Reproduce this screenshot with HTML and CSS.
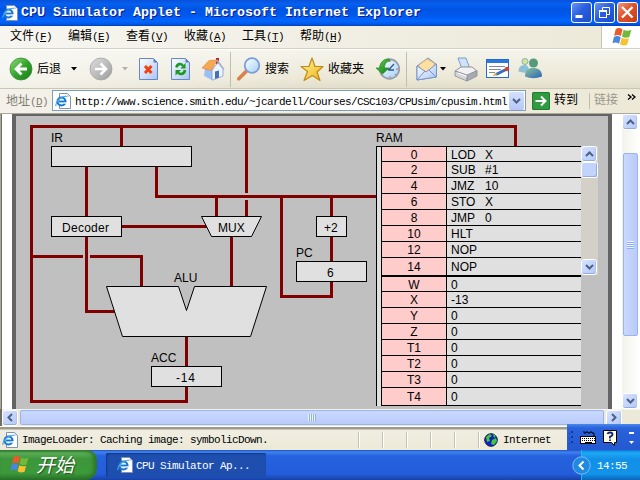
FILE: index.html
```html
<!DOCTYPE html>
<html lang="zh-CN">
<head>
<meta charset="utf-8">
<title>CPU Simulator Applet - Microsoft Internet Explorer</title>
<link rel="stylesheet" href="styles.css">
</head>
<body>
<svg class="defs" width="0" height="0" aria-hidden="true">
  <defs>
    <linearGradient id="green" x1="0" y1="0" x2="1" y2="1"><stop offset="0" stop-color="#8fdc7c"/><stop offset=".5" stop-color="#35a62c"/><stop offset="1" stop-color="#157a14"/></linearGradient>
    <linearGradient id="grey" x1="0" y1="0" x2="1" y2="1"><stop offset="0" stop-color="#dedede"/><stop offset="1" stop-color="#9c9c9c"/></linearGradient>
    <linearGradient id="paper" x1="0" y1="0" x2="1" y2="1"><stop offset="0" stop-color="#ffffff"/><stop offset="1" stop-color="#a9c4f4"/></linearGradient>
    <linearGradient id="glass" x1="0" y1="0" x2="1" y2="1"><stop offset="0" stop-color="#ffffff"/><stop offset="1" stop-color="#9fd0f8"/></linearGradient>
    <linearGradient id="gold" x1="0" y1="0" x2="1" y2="1"><stop offset="0" stop-color="#fff7a8"/><stop offset="1" stop-color="#f0b010"/></linearGradient>
    <linearGradient id="person" x1="0" y1="0" x2="1" y2="1"><stop offset="0" stop-color="#8cc49c"/><stop offset="1" stop-color="#2b63b8"/></linearGradient>
    <symbol id="flag" viewBox="0 0 20 18">
      <path fill="#ea5a2a" d="M3.500 2Q6.500 0 10 2L8.500 8.500Q5.500 6.500 2 8.500Z"/>
      <path fill="#72b83a" d="M11 2.500Q14.500 4.500 18.500 2.500L16.500 9.500Q13 11 9.500 9Z"/>
      <path fill="#4a86dc" d="M1.700 9.600Q5 7.600 8.300 9.600L6.700 15.800Q3.500 14 .5 15.500Z"/>
      <path fill="#f6c230" d="M9.200 10.200Q12.500 12 16.200 10.700L14.500 16.700Q11 18.500 7.600 16.300Z"/>
    </symbol>
    <symbol id="iepage" viewBox="0 0 16 16">
      <path fill="#fff" stroke="#8090b0" d="M4.500 .5H12.500L15.500 3.500V15.500H4.500Z"/>
      <path fill="#c8d4e8" d="M12 1V4H15Z"/>
      <circle cx="6.500" cy="8.500" r="4" fill="#e8f6ff" stroke="#1976d2" stroke-width="2.200"/>
      <path d="M4 8.500H10.500" stroke="#1976d2" stroke-width="1.800"/>
      <path d="M9 10H13" stroke="#fff" stroke-width="1.400"/>
      <path d="M1 13C0 9 7 2 12 3.500" fill="none" stroke="#46a9ea" stroke-width="1.200"/>
    </symbol>
  </defs>
</svg>

<div class="window">
  <header class="titlebar">
    <svg class="title-icon" width="16" height="16"><use href="#iepage"/></svg>
    <span class="title-text">CPU Simulator Applet - Microsoft Internet Explorer</span>
    <span class="caption min"><svg width="21" height="21"><rect x="4.500" y="13" width="7" height="3" fill="#fff"/></svg></span>
    <span class="caption max"><svg width="21" height="21"><path d="M8.500 8V5.500H15.500V12.500H13" fill="none" stroke="#fff"/><rect x="5.500" y="8.500" width="7" height="7" fill="none" stroke="#fff"/><path d="M5 9H13" stroke="#fff" stroke-width="2"/></svg></span>
    <span class="caption close"><svg width="21" height="21"><path d="M5 5L15.500 15.500M15.500 5L5 15.500" stroke="#fff" stroke-width="2.300"/></svg></span>
  </header>

  <nav class="menubar">
    <span>文件<i>(<u>F</u>)</i></span><span>编辑<i>(<u>E</u>)</i></span><span>查看<i>(<u>V</u>)</i></span><span>收藏<i>(<u>A</u>)</i></span><span>工具<i>(<u>T</u>)</i></span><span>帮助<i>(<u>H</u>)</i></span>
    <div class="throbber"><svg width="21" height="19"><use href="#flag"/></svg></div>
  </nav>

  <div class="toolbar">
    <svg class="back" width="24" height="24"><circle cx="12" cy="12" r="11" fill="url(#green)" stroke="#3c8a3a" stroke-width=".8"/><path d="M18 12H7.500M12.500 6.500L7 12L12.500 17.500" fill="none" stroke="#fff" stroke-width="2.800"/></svg>
    <span class="label back-label">后退</span>
    <svg class="drop" width="6" height="4"><path d="M0 0H6L3 3.500Z" fill="#000"/></svg>
    <svg class="forward" width="24" height="24"><circle cx="12" cy="12" r="11" fill="url(#grey)" stroke="#a4a4a4" stroke-width=".8"/><path d="M6 12H16.500M11.500 6.500L17 12L11.500 17.500" fill="none" stroke="#fff" stroke-width="2.600"/></svg>
    <svg class="drop2" width="6" height="4"><path d="M0 0H6L3 3.500Z" fill="#b5b2a5"/></svg>
    <svg class="stop" width="20" height="24"><path d="M.5 1.500H14.500L18.500 5.500V22.500H.5Z" fill="url(#paper)" stroke="#6488c8"/><path d="M14.500 1.500V5.500H18.500Z" fill="#5a80c4"/><path d="M6 9L12.500 16M12.500 9L6 16" stroke="#f0420e" stroke-width="3"/></svg>
    <svg class="refresh" width="20" height="24"><path d="M.5 1.500H14.500L18.500 5.500V22.500H.5Z" fill="url(#paper)" stroke="#6488c8"/><path d="M14.500 1.500V5.500H18.500Z" fill="#5a80c4"/><path d="M5.500 10.500C6 6.500 10.500 6 12 9M14 13C13.500 17.500 9 18 7 15.500" fill="none" stroke="#1b9a22" stroke-width="2.600"/><path d="M14.500 6V11.500H9.500ZM4.500 18.500V13H10Z" fill="#1b9a22"/></svg>
    <svg class="home" width="24" height="24"><rect x="15" y="1" width="3" height="6" fill="#b3242c"/><path d="M4 11L13 6L11 23L3 19Z" fill="#9cc0f4"/><path d="M11 23V13L17 5.500L22 12V19L12 23Z" fill="#eef4ff" stroke="#7c9fd8" stroke-width=".8"/><path d="M1 11L8 3.500L16.500 3L10 13.500Z" fill="#f8a850" stroke="#e07f2c" stroke-width=".6"/><path d="M16 3L23 12.500" stroke="#a8b4cc" stroke-width="1.400"/><path d="M14 14.500L18 13.500V20.500L14 22Z" fill="#4470b4"/></svg>
    <span class="sep"></span>
    <svg class="search" width="24" height="24"><path d="M1.800 21.800L9.500 14" stroke="#d8824a" stroke-width="3.600" stroke-linecap="round"/><circle cx="15" cy="8.500" r="7.300" fill="url(#glass)" stroke="#7d9cdb" stroke-width="1.800"/></svg>
    <span class="label search-label">搜索</span>
    <svg class="star" width="25" height="25"><path d="M12 1L15 9.500L23 9.500L17 15L20 23.500L12.500 18.500L4 23.500L7.500 14.500L1 9.500L9 9.500Z" fill="url(#gold)" stroke="#c08a12" stroke-width="1.200" stroke-linejoin="round"/></svg>
    <span class="label fav-label">收藏夹</span>
    <svg class="history" width="24" height="24"><circle cx="13.500" cy="12" r="9.700" fill="url(#glass)" stroke="#98a0ac" stroke-width="1.900"/><path d="M12.500 13L18 7M12 13H18" stroke="#345a88" stroke-width="1.300"/><path d="M14 5V3.500M22 12H20M14 20.500V19M19 17L20 18" stroke="#c66"/><path d="M13 2C7 2 4 6 4 11H0L6.500 17L13 11H8.500C8.500 7 10 4.500 14 4Z" fill="url(#green)" stroke="#20892a" stroke-width=".7"/></svg>
    <span class="sep sep2"></span>
    <svg class="mail" width="22" height="24"><path d="M1 9L12 1L20 7V20L1 23Z" fill="#bdd8fa" stroke="#7594c8"/><path d="M3 8L11 2L18 6V12L11 15L4 12Z" fill="#ffe0a0" stroke="#e1b067" stroke-width=".8"/><path d="M1 9L10 15L20.500 7V20L1 23Z" fill="url(#paper)" stroke="#7594c8"/><path d="M1 23L9 14M20 20L13 13" stroke="#7594c8"/></svg>
    <svg class="drop3" width="6" height="4"><path d="M0 0H6L3 3.500Z" fill="#000"/></svg>
    <svg class="printer" width="25" height="25"><path d="M4 1H12L16 12H8Z" fill="#cfe3fd" stroke="#7d9ccc"/><path d="M1 14L7 10H18L23 14L14 19Z" fill="#f2f2f2" stroke="#929292"/><path d="M1 14L13 18V24L1 19Z" fill="#d4d6da" stroke="#868a90" stroke-width=".8"/><path d="M13 18L23 13.500V19L13 24Z" fill="#a7abb1" stroke="#868a90" stroke-width=".8"/><path d="M4 16L13 19.500" stroke="#fff" fill="none"/></svg>
    <svg class="edit" width="24" height="20"><rect x=".5" y=".5" width="22" height="18" fill="#fff" stroke="#2969c8"/><rect x="1" y="1" width="21" height="3" fill="#2a78e4"/><path d="M3 7.500H19M3 10.500H15M3 13.500H9" stroke="#8a8a8a"/><path d="M10 15.500L20 10.500" stroke="#396dbb" stroke-width="3"/><path d="M6.500 17L10 13.500L11 16.500Z" fill="#e5a550"/><circle cx="21" cy="10" r="2.200" fill="#d9412d"/></svg>
    <svg class="people" width="25" height="22"><circle cx="7" cy="4.500" r="3" fill="#d8e498" stroke="#68a8b4" stroke-width=".8"/><path d="M.5 14.500C.5 9 4 8 7 8S11 11 11 15Q6 16.500 .5 14.500Z" fill="#8cc0d4"/><circle cx="15.500" cy="6" r="4.500" fill="#56997c"/><path d="M7 19.500C7 13 10 11 15 11S24 13 24 19.500Q15 23 7 19.500Z" fill="url(#person)"/></svg>
  </div>

  <div class="addressbar">
    <span class="addr-label">地址<i>(<u>D</u>)</i></span>
    <div class="addr-field">
      <svg width="16" height="16"><use href="#iepage"/></svg>
      <span class="url">http://www.science.smith.edu/~jcardell/Courses/CSC103/CPUsim/cpusim.html</span>
      <span class="combo"><svg width="9" height="6"><path d="M1 1L4.500 4.500L8 1" fill="none" stroke="#4d6185" stroke-width="2"/></svg></span>
    </div>
    <svg class="go" width="18" height="18"><rect width="18" height="18" rx="1.500" fill="#2f9a3e"/><rect x=".5" y=".5" width="17" height="17" rx="1.500" fill="none" stroke="#1f7c30"/><path d="M3.500 9H13M9 4.500L13.500 9L9 13.500" fill="none" stroke="#fff" stroke-width="2"/></svg>
    <span class="go-label">转到</span>
    <span class="links-label">链接</span>
    <svg class="more" width="9" height="7"><path d="M1 .5L4 3L1 5.500M5 .5L8 3L5 5.500" fill="none" stroke="#000" stroke-width="1.300"/></svg>
  </div>

  <main class="viewport">
    <div class="applet">
      <svg class="diagram" width="592" height="293" viewBox="16 116 592 293">
        <g class="bus">
          <path d="M186.500 387V401.500H31.500V126.500H515.500V147"/>
          <path d="M121.500 126V146M246.500 126V193M246.500 200V217"/>
          <path d="M86.500 167V217M156.500 167V196.500H377M216.500 196V217"/>
          <path d="M122 226.500H207M231.500 237V287M86.500 237V311.500H117"/>
          <path d="M31 256.500H83M90 256.500H141.500V287M186.500 337V367"/>
          <path d="M331.500 196V217M331.500 237V262M331.500 282V296.500H281.500V196"/>
        </g>
        <g class="part">
          <rect x="51.500" y="146.500" width="140" height="20"/>
          <rect x="51.500" y="216.500" width="70" height="20"/>
          <path d="M201.500 216.500H261.500L251.500 236.500H211.500Z"/>
          <path d="M106.500 286.500H178.500L186.500 310.500L194.500 286.500H266.500L250.500 336.500H122.500Z"/>
          <rect x="151.500" y="366.500" width="70" height="20"/>
          <rect x="316.500" y="216.500" width="30" height="20"/>
          <rect x="296.500" y="261.500" width="70" height="20"/>
        </g>
        <g class="caption-text">
          <text x="51" y="142">IR</text>
          <text x="376" y="142">RAM</text>
          <text x="62" y="232" textLength="47">Decoder</text>
          <text x="218" y="232">MUX</text>
          <text x="174" y="282">ALU</text>
          <text x="324" y="232">+2</text>
          <text x="296" y="257">PC</text>
          <text x="327" y="277">6</text>
          <text x="151" y="362">ACC</text>
          <text x="176" y="382" textLength="19">-14</text>
        </g>
      </svg>
      <div class="ram">
        <div class="memory">
          <b>0</b><span>LOD<em>X</em></span>
          <b>2</b><span>SUB<em>#1</em></span>
          <b>4</b><span>JMZ<em>10</em></span>
          <b>6</b><span>STO<em>X</em></span>
          <b>8</b><span>JMP<em>0</em></span>
          <b>10</b><span>HLT</span>
          <b>12</b><span>NOP</span>
          <b>14</b><span>NOP</span>
          <b>W</b><span>0</span>
          <b>X</b><span>-13</span>
          <b>Y</b><span>0</span>
          <b>Z</b><span>0</span>
          <b>T1</b><span>0</span>
          <b>T2</b><span>0</span>
          <b>T3</b><span>0</span>
          <b>T4</b><span>0</span>
        </div>
        <div class="ram-scroll">
          <span class="sbtn"><svg width="9" height="6"><path d="M1 5L4.500 1.500L8 5" fill="none" stroke="#4d6185" stroke-width="2"/></svg></span>
          <span class="ram-thumb"></span>
          <span class="sbtn down"><svg width="9" height="6"><path d="M1 1L4.500 4.500L8 1" fill="none" stroke="#4d6185" stroke-width="2"/></svg></span>
        </div>
      </div>
    </div>
    <div class="vscroll">
      <span class="sbtn"><svg width="9" height="6"><path d="M1 5L4.500 1.500L8 5" fill="none" stroke="#4d6185" stroke-width="2"/></svg></span>
      <span class="vthumb"><i class="grip"></i></span>
      <span class="sbtn down"><svg width="9" height="6"><path d="M1 1L4.500 4.500L8 1" fill="none" stroke="#4d6185" stroke-width="2"/></svg></span>
    </div>
  </main>

  <div class="hscroll">
    <span class="sbtn"><svg width="6" height="9"><path d="M5 1L1.500 4.500L5 8" fill="none" stroke="#4d6185" stroke-width="2"/></svg></span>
    <span class="hthumb"><i class="grip across"></i></span>
    <span class="sbtn"><svg width="6" height="9"><path d="M1 1L4.500 4.500L1 8" fill="none" stroke="#4d6185" stroke-width="2"/></svg></span>
  </div>

  <div class="statusbar">
    <svg width="16" height="16"><use href="#iepage"/></svg>
    <span class="status-text">ImageLoader: Caching image: symbolicDown.</span>
    <span class="pane"></span><span class="pane"></span><span class="pane"></span><span class="pane"></span><span class="pane"></span>
    <span class="pane zone">
      <svg width="14" height="14"><circle cx="7" cy="7" r="6.300" fill="#1020c8" stroke="#182040"/><path d="M2 4L6 1L8 3L5 5L6 8L3 9ZM8 7L12 5L13 8L10 12L7 11ZM9 1L12 3L10 5Z" fill="#42c838"/></svg>
      Internet
    </span>
    <div class="langbar">
      <svg width="73" height="26">
        <path d="M4 7h2v2H4zM4 12h2v2H4zM4 17h2v2H4zM2 9h1v1H2zM2 14h1v1H2zM2 19h1v1H2z" fill="#0b3aa5"/>
        <path d="M17 7V9H19V8H21V9H23V8H25V9H27V12" fill="none" stroke="#000"/>
        <rect x="13.500" y="12.500" width="15" height="7" fill="#fff" stroke="#000"/>
        <path d="M15 14.500H28M15 16.500H28" stroke="#000" stroke-dasharray="1 1"/><path d="M18 18.500H25" stroke="#000"/>
        <path d="M36.500 6.500H49.500V18.500H47.500V21.500L44.500 18.500H36.500Z" fill="#fffde0" stroke="#000"/>
        <path d="M40.500 10Q41 8.500 43 8.500Q45.500 8.500 45.500 10.500Q45.500 12 43 12.700V14.500M43 15.500V17" fill="none" stroke="#112080" stroke-width="1.800"/>
        <path d="M62 8h5v2h-5zM62 17h5l-2.500 3z" fill="#fff"/>
      </svg>
    </div>
  </div>
</div>

<footer class="taskbar">
  <div class="start"><svg width="20" height="18"><use href="#flag"/></svg><span>开始</span></div>
  <div class="task"><svg width="16" height="16"><use href="#iepage"/></svg><span>CPU Simulator Ap...</span></div>
  <div class="tray">
    <svg class="expand" width="19" height="19"><circle cx="9.500" cy="9.500" r="8.700" fill="#2089e2" stroke="#7dbcf2"/><path d="M11.500 5.500L7.500 9.500L11.500 13.500" fill="none" stroke="#fff" stroke-width="2"/></svg>
    <span>14:55</span>
  </div>
</footer>
</body>
</html>
```

FILE: styles.css
```css
* { box-sizing: border-box; }
html, body { margin: 0; width: 640px; height: 480px; overflow: hidden; }
body { font: 12px/16px "Liberation Mono", "Noto Sans CJK SC", monospace; color: #000; background: #ece9d8; }
svg { display: block; flex: none; }
.defs { position: absolute; }
i, em, b { font-style: normal; font-weight: normal; }
.window { height: 450px; display: flex; flex-direction: column; }
.window > * { flex: none; }

/* Title bar */
.titlebar { height: 26px; display: flex; align-items: center; padding: 0 2px 1px 2px; background: linear-gradient(#0a50d8 0, #0560f0 4px, #0054e4 9px, #0058ec 15px, #0266ff 21px, #0058e8 24px, #0040bc 26px); }
.title-text { flex: 1; margin-left: 3px; font: bold 13.33px/18px "Liberation Mono", monospace; color: #fff; white-space: nowrap; text-shadow: 1px 1px #0a1883; }
.caption { width: 21px; height: 21px; margin-left: 2px; border: 1px solid #fff; border-radius: 3px; background: linear-gradient(135deg, #6b95f0, #2a5fe0 45%, #1c4cc8); overflow: hidden; }
.caption svg { margin: -1px; }
.close { background: linear-gradient(135deg, #f0987c, #e0522c 45%, #c83c14); }

/* Menu bar */
.menubar { height: 23px; display: flex; align-items: center; gap: 16px; padding-left: 10px; background: linear-gradient(90deg, #f6f5f0, #ece9d8); border-bottom: 1px solid #d5d1bf; }
.menubar > span { width: 42px; white-space: nowrap; line-height: 22px; }
.menubar i, .addr-label i { font-size: 11px; letter-spacing: -.6px; }
.throbber { align-self: stretch; margin-left: auto; width: 39px; padding: 1px 0 0 10px; background: #fff; border-left: 1px solid #c8c4b2; }

/* Toolbar */
.toolbar { height: 40px; display: flex; align-items: center; background: linear-gradient(90deg, rgba(250,250,247,.7), rgba(236,233,216,0) 50%), linear-gradient(#f5f4ec, #ece8d7 75%, #e2decb); border-top: 1px solid #fff; border-bottom: 1px solid #cbc7b5; }
.label { white-space: nowrap; line-height: 18px; padding-top: 1px; }
.back { margin-left: 9px; }
.back-label { margin-left: 4px; width: 24px; }
.drop { margin-left: 10px; }
.forward { margin-left: 12px; }
.drop2 { margin-left: 9px; }
.stop { margin-left: 11px; }
.refresh { margin-left: 12px; }
.home { margin-left: 10px; }
.sep { width: 1px; height: 35px; margin-left: 5px; background: #c2beac; }
.search { margin-left: 6px; }
.search-label { margin-left: 4px; width: 24px; }
.star { margin-left: 11px; }
.fav-label { margin-left: 3px; width: 36px; }
.history { margin-left: 12px; }
.sep2 { margin-left: 6px; }
.mail { margin-left: 9px; }
.drop3 { margin-left: 2px; }
.printer { margin-left: 8px; }
.edit { margin-left: 7px; }
.people { margin-left: 8px; margin-top: -2px; }

/* Address bar */
.addressbar { height: 24px; display: flex; align-items: center; padding: 0 0 1px 6px; background: linear-gradient(90deg, #f3f1e9, #ece9d8); }
.addr-label { width: 46px; padding-top: 2px; color: #817f73; white-space: nowrap; }
.addr-field { width: 474px; height: 21px; display: flex; align-items: center; padding: 0 1px 0 2px; background: #fff; border: 1px solid #7f9db9; }
.url { flex: 1; margin-left: 4px; font-size: 11px; letter-spacing: -.601px; white-space: nowrap; padding-top: 2px; }
.combo { width: 15px; height: 18px; display: grid; place-items: center; border-radius: 2px; background: linear-gradient(#d3e0fe, #b5c8f6); }
.go { margin-left: 6px; }
.go-label { margin-left: 4px; width: 35px; padding-top: 1px; }
.links-label { padding-left: 4px; width: 36px; color: #9a978b; border-left: 1px solid #c2beac; }
.more { margin: -6px 0 0 2px; }

/* Page area */
.viewport { height: 296px; display: flex; justify-content: space-between; padding: 1px 1px 0 12px; background: #fff; border-top: 0; box-shadow: inset 1px 1px #aca899, inset 2px 0 #716f64; }
.applet { position: relative; width: 600px; border: 4px solid #646464; border-width: 2px 4px 0; background: #c0c0c0; }
.bus path { fill: none; stroke: #800000; stroke-width: 3; shape-rendering: crispEdges; }
.part { fill: #e0e0e0; stroke: #000; }
.part rect { shape-rendering: crispEdges; }
.caption-text { font: 12px "Liberation Sans", sans-serif; }
.ram { position: absolute; left: 360px; top: 30px; display: flex; font: 12px/15px "Liberation Sans", sans-serif; }
.memory { width: 205px; height: 260px; display: grid; grid-template-columns: 65px 1fr; grid-template-rows: 15px repeat(6, 16px) 19px 15px repeat(6, 16px) 18px; padding-left: 4px; background: #e0e0e0; border-top: 1px solid #000; border-left: 1px solid #000; }
.memory b, .memory span { border-bottom: 1px solid #000; padding-top: 1px; }
.memory b { background: #fcc; text-align: center; border-left: 1px solid #000; }
.memory span { display: flex; padding-left: 4px; border-left: 1px solid #000; }
.memory b:nth-child(15), .memory span:nth-child(16) { border-bottom-width: 2px; padding-top: 2px; }
.memory em { position: absolute; left: 109px; }
.memory b:nth-child(31), .memory span:nth-child(32) { padding-top: 2px; }

/* Scroll bars */
.sbtn { width: 16px; height: 16px; display: grid; place-items: center; border: 1px solid #fff; border-radius: 3px; background: linear-gradient(135deg, #d6e2ff, #b4c9f8); box-shadow: inset 0 -1px #93addf, inset -1px 0 #b0c4ee; flex: none; }
.ram-scroll { width: 17px; height: 129px; display: flex; flex-direction: column; background: #d4d0c8; }
.ram-thumb { width: 15px; height: 14px; margin: 1px; border-radius: 2px; background: #c2d3fc; box-shadow: 0 0 0 1px #fff, inset -1px -1px #93addf; }
.down { margin-top: auto; }
.vscroll { width: 17px; display: flex; flex-direction: column; background: linear-gradient(90deg, #f3f2ec, #fefefb); }
.vthumb { display: grid; place-items: center; width: 15px; height: 183px; margin: 23px 1px 0; border: 1px solid #98b4ec; border-radius: 2px; background: linear-gradient(90deg, #cad8ff, #b9cbf8); }
.grip { width: 7px; height: 8px; background: repeating-linear-gradient(#eef4fe 0 1px, #8cb0f8 1px 2px); }
.across { width: 8px; height: 7px; background: repeating-linear-gradient(90deg, #eef4fe 0 1px, #8cb0f8 1px 2px); }
.hscroll { height: 17px; display: flex; align-items: center; padding: 0 18px 0 2px; background: #ece9d8; box-shadow: inset 2px 0 #716f64, inset 0 1px #f5f4ee; }
.hthumb { flex: 1; height: 15px; display: grid; place-items: center; margin: 0 2px; border: 1px solid #98b4ec; border-radius: 2px; background: linear-gradient(#cad8ff, #b9cbf8); }

/* Status bar */
.statusbar { position: relative; height: 24px; display: flex; align-items: center; padding: 4px 0 0 2px; font-size: 11px; letter-spacing: -.601px; background: linear-gradient(#fff 0 1px, #9d9a8b 1px 3px, #f0eee2 4px, #ece9d8); }
.status-text { margin-left: 4px; width: 336px; white-space: nowrap; }
.pane { width: 24px; height: 16px; border-left: 1px solid #c5c2b2; box-shadow: inset 1px 0 #fff; }
.zone { width: 86px; display: flex; align-items: center; gap: 5px; padding-left: 5px; }
.langbar { position: absolute; right: 0; top: -2px; background: linear-gradient(#4a88ec 0, #2a63dc 4px, #2458d0); }

/* Task bar */
.taskbar { height: 30px; display: flex; align-items: center; color: #fff; font-size: 11px; letter-spacing: -.601px; background: linear-gradient(#1f4fc0 0, #3f84f0 2px, #2562dd 6px, #245ddb 24px, #1941a5); }
.start { width: 97px; height: 30px; display: flex; align-items: center; gap: 6px; padding-left: 10px; border-radius: 0 10px 12px 0; background: linear-gradient(#357a32 0, #5cae58 3px, #3d963b 9px, #3c9a3a 23px, #2a702a); box-shadow: inset -3px 0 4px #2a702a; }
.start span { font: italic 19px/26px "Noto Sans CJK SC", sans-serif; letter-spacing: 0; text-shadow: 1px 1px 1px #214f20; margin-top: -2px; }
.start svg { margin-bottom: 2px; }
.task { width: 160px; height: 24px; display: flex; align-items: center; gap: 3px; margin-left: 9px; padding-left: 11px; border-radius: 2px; background: #1e4fae; box-shadow: inset 1px 1px 2px #123580; white-space: nowrap; }
.task span { padding-top: 2px; }
.tray { width: 59px; height: 30px; display: flex; align-items: center; margin-left: auto; background: linear-gradient(#0d76d8 0, #1eaaf4 3px, #1290e8 9px, #1193ea 24px, #0c65ba); border-left: 1px solid #15c2f8; }
.expand { margin-left: -10px; }
.tray span { margin-left: 6px; padding-top: 1px; }
```
